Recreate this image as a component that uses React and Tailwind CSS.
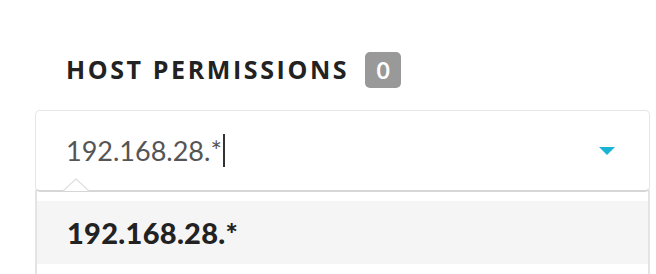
import React from "react";

const App = () => {
  return (
    <div className="w-[656px] h-[274px] bg-white overflow-hidden font-['Lato',sans-serif]">
      <div className="pl-[35px] pr-[6px] pt-[52px]">
        <div className="flex items-center pl-[31px] h-[36px]">
          <span className="font-['Open_Sans',sans-serif] text-[25px] font-bold tracking-[2.6px] text-[#222]">
            HOST PERMISSIONS
          </span>
          <span className="ml-[16px] w-[36px] h-[36px] rounded-[5px] bg-[#999] text-white text-[23px] font-bold flex items-center justify-center">
            0
          </span>
        </div>

        <div className="mt-[22px] relative h-[82px] border border-[#e6e6e6] border-b-[#d6d6d6] border-b-2 rounded-[5px] flex items-center pl-[30px] pr-[34px]">
          <span className="text-[27px] text-[#555] leading-none">192.168.28.*</span>
          <span className="w-[2px] h-[33px] bg-[#333] ml-[1px]"></span>
          <svg className="ml-auto" width="16" height="8" viewBox="0 0 16 8">
            <path d="M0 0 L16 0 L8 8 Z" fill="#19b3d3" />
          </svg>
          <svg className="absolute left-[27px] -bottom-[2px]" width="26" height="14" viewBox="0 0 26 14">
            <path d="M0 13 L13 1 L26 13 Z" fill="white" />
            <path d="M0 13 L13 1 L26 13" fill="none" stroke="#e2e2e2" strokeWidth="1.5" />
          </svg>
        </div>

        <div className="border-l-2 border-r-2 border-[#e4e4e4] pt-[11px] h-[90px] -mt-[2px]">
          <div className="h-[63px] bg-[#f5f5f5] flex items-center pl-[30px]">
            <span className="text-[29px] font-black tracking-[0.3px] text-[#222] leading-none">192.168.28.*</span>
          </div>
        </div>
      </div>
    </div>
  );
};

export default App;
